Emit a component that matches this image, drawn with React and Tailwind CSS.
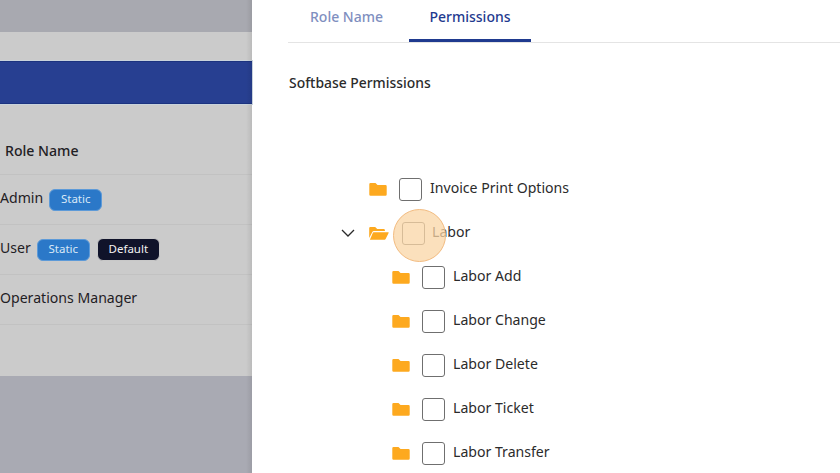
const FONT = "font-['Noto_Sans',sans-serif]";

function FolderClosed() {
  return (
    <svg width="18" height="14" viewBox="0 0 18 14" className="shrink-0">
      <path d="M1.500 1h5l2 2h8a1.200 1.200 0 0 1 1.200 1.200v8.300a1.200 1.200 0 0 1-1.200 1.200h-15A1.200 1.200 0 0 1 .3 12.500v-10.300A1.200 1.200 0 0 1 1.500 1z" fill="#fda91f" />
    </svg>
  );
}

function FolderOpen() {
  return (
    <svg width="20" height="14" viewBox="0 0 20 14" className="shrink-0">
      <path d="M1.200 1h5l2 2h6.500a1.200 1.200 0 0 1 1.200 1.200V5H5a2 2 0 0 0-1.800 1.200L.2 12V2A1.200 1.200 0 0 1 1.200 1z" fill="#fda91f" />
      <path d="M4.500 6.200h14.600a.6.600 0 0 1 .5.900l-3 6a1.200 1.200 0 0 1-1 .6H.9l3-7a.7.700 0 0 1 .6-.5z" fill="#fda91f" />
    </svg>
  );
}

function Chevron() {
  return (
    <svg width="16" height="10" viewBox="0 0 16 10" className="shrink-0">
      <path d="M2 2l6 6 6-6" fill="none" stroke="#2a2a2a" strokeWidth="1.300" />
    </svg>
  );
}

function TreeRow({ label, child, open }) {
  return (
    <div className={`flex h-11 items-center ${child ? "pl-[104px]" : "pl-[81px]"}`}>
      {open ? (
        <>
          <span className="ml-[-29px] mr-[13px] flex"><Chevron /></span>
          <FolderOpen />
          <span className="w-[13px]" />
        </>
      ) : (
        <>
          <FolderClosed />
          <span className="w-[12px]" />
        </>
      )}
      <span className={`h-[23px] w-[23px] shrink-0 rounded-[3px] border border-[#6f6f6f] bg-white ${open ? "mt-[1px]" : ""}`} />
      <span className={`mb-[1px] text-[14.100px] leading-none text-[#2b2b2b] ${open ? "ml-[7px]" : "ml-[8px]"}`}>{label}</span>
    </div>
  );
}

function RoleRow({ name, badges }) {
  return (
    <div className="flex h-[50px] items-center border-b border-[#c2c2c2] text-[14.100px] text-[#1f2024]">
      <span className="mb-[3px]">{name}</span>
      {badges.includes("Static") && (
        <span className="ml-[6px] flex h-[22px] w-[53px] items-center justify-center rounded-[6px] border border-[#5d9ad8] bg-[#2b78c8] pb-[1px] text-[11.500px] text-[#d9e8f7]">Static</span>
      )}
      {badges.includes("Default") && (
        <span className="ml-[7px] flex h-[23px] w-[63px] items-center justify-center rounded-[6px] border border-[#c8c8c8] bg-[#10132a] pb-[1px] text-[11.500px] text-[#f2f2f2]">Default</span>
      )}
    </div>
  );
}

export default function App() {
  return (
    <div className={`flex h-[473px] w-[840px] overflow-hidden bg-white ${FONT}`}>
      <div className="relative flex w-[252px] shrink-0 flex-col bg-[#a9aab3]">
        <div className="h-[32px] bg-[#a8a9b0]" />
        <div className="h-[344px] bg-[#cbcbcb]">
          <div className="h-[29px]" />
          <div className="h-[43px] border-y-[1px] border-y-[#1c3380] bg-[#273f91] outline outline-[#c9d3dc]" />
          <div className="flex h-[71px] items-end border-b border-[#c2c2c2] pb-[13px] pl-[5px] text-[14.100px] font-medium text-[#1f2024]">Role Name</div>
          <RoleRow name="Admin" badges={["Static"]} />
          <RoleRow name="User" badges={["Static", "Default"]} />
          <RoleRow name="Operations Manager" badges={[]} />
        </div>
        <div className="absolute inset-y-0 right-0 w-[6px] bg-gradient-to-r from-transparent to-[#00000014]" />
      </div>

      <div className="min-w-0 flex-1 pl-[36px]">
        <div className="flex h-[43px] items-end border-b border-[#e4e4e4]">
          <div className="flex h-[36px] w-[121px] justify-center pr-[4px] text-[14px] font-medium text-[#7f8fbf]">Role Name</div>
          <div className="flex h-[36px] w-[122px] justify-center border-b-[3px] border-[#1f3a8f] text-[14px] font-medium text-[#1f3a8f]">Permissions</div>
        </div>
        <div className="ml-[1px] mt-[28px] text-[13.900px] font-medium leading-[24px] text-[#2b2b2b]">Softbase Permissions</div>
        <div className="relative mt-[72px]">
          <TreeRow label="Invoice Print Options" />
          <TreeRow label="Labor" open />
          <TreeRow label="Labor Add" child />
          <TreeRow label="Labor Change" child />
          <TreeRow label="Labor Delete" child />
          <TreeRow label="Labor Ticket" child />
          <TreeRow label="Labor Transfer" child />
          <div className="absolute left-[105px] top-[42px] h-[53px] w-[53px] rounded-full border-[1.500px] border-[#f2bb80] bg-[#fad5a5]/75" />
        </div>
      </div>
    </div>
  );
}
